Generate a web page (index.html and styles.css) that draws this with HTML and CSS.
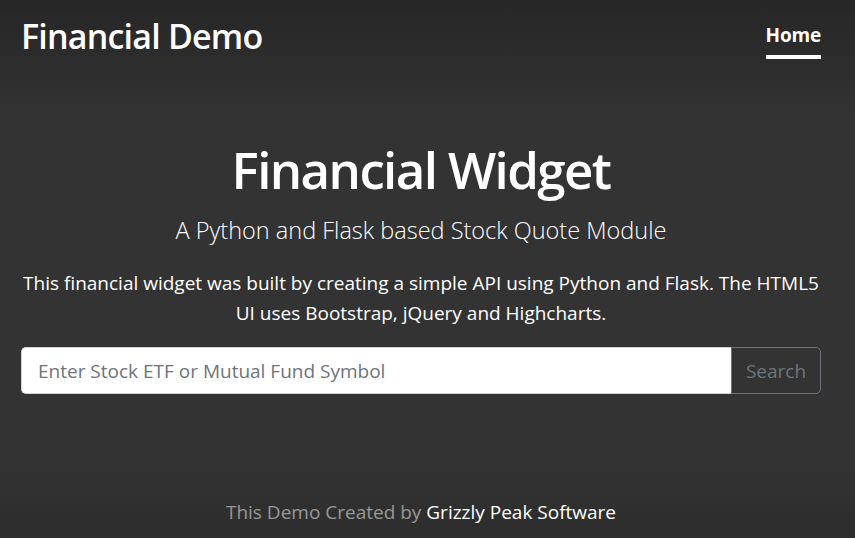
FILE: index.html
```html
<!DOCTYPE html>
<html lang="en">
<head>
<meta charset="utf-8">
<title>Financial Demo</title>
<link rel="stylesheet" href="styles.css">
</head>
<body>
<div class="cover">
  <header class="masthead">
    <h3 class="brand">Financial Demo</h3>
    <nav class="nav">
      <a class="nav-link active" href="#">Home</a>
    </nav>
  </header>
  <main class="hero">
    <h1 class="hero-title">Financial Widget</h1>
    <p class="hero-sub">A Python and Flask based Stock Quote Module</p>
    <p class="hero-text">This financial widget was built by creating a simple API using Python and Flask. The HTML5 UI uses Bootstrap, jQuery and Highcharts.</p>
    <form class="search">
      <input class="search-input" type="text" placeholder="Enter Stock ETF or Mutual Fund Symbol">
      <button class="search-btn" type="button">Search</button>
    </form>
  </main>
  <footer class="footer">
    <p>This Demo Created by <a href="#">Grizzly Peak Software</a></p>
  </footer>
</div>
</body>
</html>
```
FILE: styles.css
```css
html, body {
  height: 100%;
}
body {
  margin: 0;
  background: linear-gradient(#262626 0, #333 120px, #333 calc(100% - 80px), #2d2d2d 100%);
  color: #fff;
  font-family: "Open Sans", "Noto Sans", sans-serif;
}
.cover {
  display: flex;
  flex-direction: column;
  height: 100%;
  box-sizing: border-box;
  padding: 0 34px 0 21px;
}
.masthead {
  display: flex;
  justify-content: space-between;
  align-items: flex-start;
  padding-top: 16px;
}
.brand {
  margin: 0;
  font-size: 34px;
  font-weight: 600;
  line-height: 1.2;
  letter-spacing: -0.8px;
}
.nav {
  display: flex;
  padding-top: 5px;
}
.nav-link {
  color: #fff;
  text-decoration: none;
  font-weight: 700;
  font-size: 19px;
  line-height: 1.5;
  padding: 0 0 5px;
  border-bottom: 4px solid #fff;
  letter-spacing: -0.2px;
}
.hero {
  text-align: center;
  margin-top: 80px;
}
.hero-title {
  margin: 0;
  font-size: 51px;
  font-weight: 600;
  line-height: 1.2;
  letter-spacing: -1.6px;
}
.hero-sub {
  margin: 13.5px 0 0;
  font-size: 23.5px;
  font-weight: 300;
  line-height: 1.5;
}
.hero-text {
  margin: 20px 0 0;
  font-size: 19px;
  line-height: 30px;
}
.search {
  display: flex;
  margin-top: 19px;
  height: 47px;
}
.search-input {
  flex: 1;
  min-width: 0;
  box-sizing: border-box;
  height: 47px;
  border: 1px solid #ced4da;
  border-right: 0;
  border-radius: 5px 0 0 5px;
  padding: 0 16px;
  font-family: inherit;
  font-size: 19px;
  color: #495057;
  background: #fff;
  outline: none;
}
.search-input::placeholder {
  color: #6c757d;
}
.search-btn {
  box-sizing: border-box;
  width: 90px;
  height: 47px;
  background: transparent;
  border: 1px solid #6c757d;
  border-radius: 0 5px 5px 0;
  color: #6c757d;
  font-family: inherit;
  font-size: 19px;
  padding: 0;
}
.footer {
  margin-top: auto;
  text-align: center;
  color: rgba(255, 255, 255, .5);
  font-size: 19px;
}
.footer p {
  margin: 0 0 12px;
  line-height: 1.5;
}
.footer a {
  color: #fff;
  text-decoration: none;
}
```
